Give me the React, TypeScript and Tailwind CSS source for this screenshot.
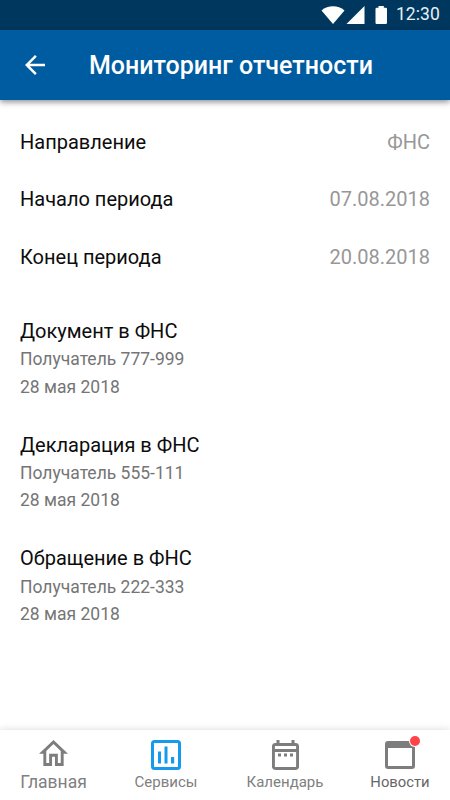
import type { ReactNode } from "react";

const filters = [
  { label: "Направление", value: "ФНС" },
  { label: "Начало периода", value: "07.08.2018" },
  { label: "Конец периода", value: "20.08.2018" },
];

const reports = [
  { title: "Документ в ФНС", recipient: "Получатель 777-999", date: "28 мая 2018" },
  { title: "Декларация в ФНС", recipient: "Получатель 555-111", date: "28 мая 2018" },
  { title: "Обращение в ФНС", recipient: "Получатель 222-333", date: "28 мая 2018" },
];

function StatusBar() {
  return (
    <div className="flex h-[30px] shrink-0 items-center justify-end bg-[#00375f] pr-[10px]">
      <svg className="mr-[7px] h-[30px] w-[68px]" viewBox="320.500 0 68 30" fill="#fff">
        <path d="M321 10.4C327.500 4.900 337.500 4.900 344 10.400L332.500 24Z" />
        <path d="M364 6V24H346Z" />
        <path d="M378 6H383.300V7.800H385.200Q386.500 7.800 386.500 9V22.700Q386.500 24 385.200 24H376.200Q375 24 375 22.700V9Q375 7.800 376.200 7.800H378Z" />
      </svg>
      <span className="pb-[2px] text-[17.500px] leading-[28px] tracking-[0.1px] text-[#e8f0f6]">12:30</span>
    </div>
  );
}

function HomeIcon() {
  return (
    <svg className="mr-px mt-[10px] h-[26px] w-[29px]" viewBox="2 3 20 17" preserveAspectRatio="none" fill="#7d7d7d">
      <path d="M12 5.690l5 4.500V18h-2v-6H9v6H7v-7.810l5-4.500M12 3L2 12h3v8h6v-6h2v6h6v-8h3L12 3z" />
    </svg>
  );
}

function ChartIcon() {
  return (
    <svg className="mt-[10px] h-[30px] w-[30px]" viewBox="0 0 30 30" fill="#169bec">
      <rect x="1.500" y="1.500" width="27" height="27" rx="2" fill="none" stroke="#169bec" strokeWidth="3" />
      <path d="M7 11.500h3V23.500H7zM13.500 6.500h3V23.500h-3zM20 17h3.200v6.500H20z" />
    </svg>
  );
}

function CalendarIcon() {
  return (
    <svg className="mt-[10px] h-[30px] w-[27px]" viewBox="0 0 27 30" fill="#7d7d7d">
      <rect x="1.400" y="4.500" width="24.200" height="24" rx="2" fill="none" stroke="#7d7d7d" strokeWidth="3" />
      <path d="M4.500 0h3v4h-3zM19.500 0h3v4h-3zM2 9h23v3H2zM6 13.600h3v3H6zM12 13.600h3v3h-3zM18 13.600h3v3h-3z" />
    </svg>
  );
}

function NewsIcon() {
  return (
    <div className="relative mt-[11px] h-[28px] w-[30px]">
      <svg className="h-[28px] w-[30px]" viewBox="0 0 30 28" fill="#7d7d7d">
        <path fillRule="evenodd" d="M3 0H27Q30 0 30 3V25Q30 28 27 28H3Q0 28 0 25V3Q0 0 3 0ZM3 7V25H27V7Z" />
      </svg>
      <span className="absolute -top-[5px] left-[25px] h-[10px] w-[10px] rounded-full bg-[#ff434a] ring-1 ring-white" />
    </div>
  );
}

function Tab({ icon, label, className }: { icon: ReactNode; label: string; className: string }) {
  return (
    <div className={`flex shrink-0 flex-col items-center ${className}`}>
      <div className="flex h-[42px]">{icon}</div>
      <span className="whitespace-nowrap leading-[21px]">{label}</span>
    </div>
  );
}

export default function App() {
  return (
    <div className="flex h-[800px] w-[450px] flex-col overflow-hidden bg-white font-['Roboto',sans-serif]">
      <StatusBar />
      <header className="flex h-[70px] shrink-0 items-center bg-[#005ca0] pl-[25px] shadow-[0_2px_6px_rgba(0,0,0,0.450)]">
        <svg className="h-[20px] w-[20px]" viewBox="4 4 16 16" fill="#fff">
          <path d="M20 11H7.830l5.590-5.590L12 4l-8 8 8 8 1.410-1.410L7.830 13H20v-2z" />
        </svg>
        <h1 className="ml-[44px] whitespace-nowrap pt-[2px] text-[25px] font-medium text-white">Мониторинг отчетности</h1>
      </header>
      <main className="flex-1 px-5 pt-[13.200px]">
        {filters.map((f) => (
          <div key={f.label} className="flex h-[57.400px] items-center justify-between text-[20px]">
            <span className="text-[#0c0c0c]">{f.label}</span>
            <span className="text-[#979797]">{f.value}</span>
          </div>
        ))}
        <div className="mt-[31.500px]">
          {reports.map((r) => (
            <article key={r.title} className="h-[113.800px]">
              <h2 className="text-[20px] leading-[28px] text-[#0c0c0c]">{r.title}</h2>
              <p className="mt-[1.200px] text-[17.500px] leading-[27.600px] text-[#757575]">{r.recipient}</p>
              <p className="text-[17.500px] leading-[27.600px] text-[#757575]">{r.date}</p>
            </article>
          ))}
        </div>
      </main>
      <nav className="flex h-[70px] shrink-0 bg-white shadow-[0_-1px_7px_rgba(0,0,0,0.120)]">
        <Tab icon={<HomeIcon />} label="Главная" className="w-[106px] pl-px text-[17.500px] text-[#808080]" />
        <Tab icon={<ChartIcon />} label="Сервисы" className="w-[120px] text-[15px] text-[#808080]" />
        <Tab icon={<CalendarIcon />} label="Календарь" className="w-[118px] text-[15px] text-[#808080]" />
        <Tab icon={<NewsIcon />} label="Новости" className="w-[106px] pl-[6px] text-[14.800px] text-[#666666]" />
      </nav>
    </div>
  );
}
